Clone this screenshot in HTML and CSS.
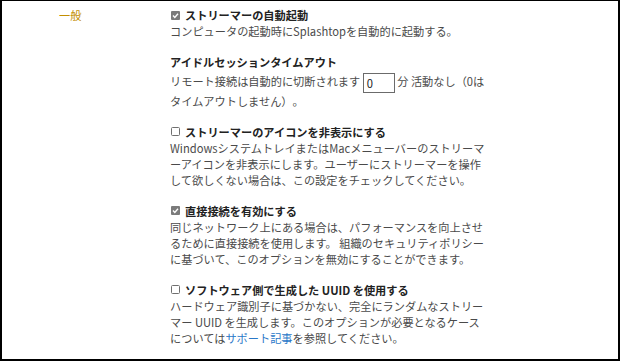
FILE: index.html
```html
<!DOCTYPE html>
<html lang="ja">
<head>
<meta charset="utf-8">
<link rel="stylesheet" href="styles.css">
</head>
<body>
<div class="frame">
  <div class="label">一般</div>
  <div class="content">
    <div class="item">
      <div class="head"><svg class="cb" width="9" height="9" viewBox="0 0 9 9"><rect x="0" y="0" width="9" height="9" rx="1" fill="#7b7b7b"/><path d="M2 4.6 L3.8 6.4 L7 2.8" fill="none" stroke="#fff" stroke-width="1.4"/></svg>ストリーマーの自動起動</div>
      <div class="desc">コンピュータの起動時にSplashtopを自動的に起動する。</div>
    </div>
    <div class="item">
      <div class="head">アイドルセッションタイムアウト</div>
      <div class="desc"><span class="inrow">リモート接続は自動的に切断されます <span class="input">0</span> 分 活動なし（0は</span><br>タイムアウトしません）。</div>
    </div>
    <div class="item">
      <div class="head"><svg class="cb" width="9" height="9" viewBox="0 0 9 9"><rect x="0.5" y="0.5" width="8" height="8" rx="1" fill="#fff" stroke="#707070"/></svg>ストリーマーのアイコンを非表示にする</div>
      <div class="desc">WindowsシステムトレイまたはMacメニューバーのストリーマ<br>ーアイコンを非表示にします。ユーザーにストリーマーを操作<br>して欲しくない場合は、この設定をチェックしてください。</div>
    </div>
    <div class="item">
      <div class="head"><svg class="cb" width="9" height="9" viewBox="0 0 9 9"><rect x="0" y="0" width="9" height="9" rx="1" fill="#7b7b7b"/><path d="M2 4.6 L3.8 6.4 L7 2.8" fill="none" stroke="#fff" stroke-width="1.4"/></svg>直接接続を有効にする</div>
      <div class="desc">同じネットワーク上にある場合は、パフォーマンスを向上させ<br>るために直接接続を使用します。 組織のセキュリティポリシー<br>に基づいて、このオプションを無効にすることができます。</div>
    </div>
    <div class="item">
      <div class="head"><svg class="cb" width="9" height="9" viewBox="0 0 9 9"><rect x="0.5" y="0.5" width="8" height="8" rx="1" fill="#fff" stroke="#707070"/></svg>ソフトウェア側で生成した UUID を使用する</div>
      <div class="desc">ハードウェア識別子に基づかない、完全にランダムなストリー<br>マー UUID を生成します。このオプションが必要となるケース<br>については<a class="link" href="#">サポート記事</a>を参照してください。</div>
    </div>
  </div>
</div>
</body>
</html>
```
FILE: styles.css
```css
* { box-sizing: border-box; }
html, body { margin: 0; padding: 0; background: #fff; }
body {
  font-family: "Noto Sans CJK JP", "Noto Sans", sans-serif;
  font-size: 11.2px;
  color: #4a4a4a;
  text-spacing-trim: space-all;
}
.frame {
  width: 620px;
  height: 361px;
  border-style: solid;
  border-color: #000;
  border-width: 1px 2px 2px 2px;
  display: grid;
  grid-template-columns: 168px 1fr;
  padding-top: 6px;
  overflow: hidden;
}
.label {
  padding-left: 57px;
  line-height: 16px;
  color: #c38f00;
}
.content {
  display: flex;
  flex-direction: column;
  gap: 15px;
}
.item { line-height: 16px; white-space: nowrap; }
.head {
  font-weight: bold;
  color: #222;
  display: flex;
  align-items: center;
}
.cb { margin: 0 5px 0 1px; flex: none; }
.desc { color: #4a4a4a; }
.inrow { display: inline-block; line-height: 22px; }
.input {
  display: inline-block;
  width: 32px;
  height: 20px;
  border: 1px solid #6b6b6b;
  line-height: 18px;
  padding-left: 3px;
  vertical-align: middle;
  color: #222;
}
.link { color: #2a78c8; text-decoration: none; }
```
